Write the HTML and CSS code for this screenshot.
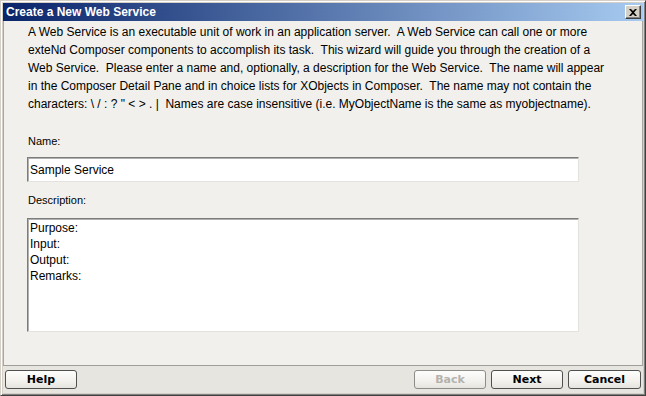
FILE: index.html
```html
<!DOCTYPE html>
<html lang="en">
<head>
    <meta charset="UTF-8">
    <title>Create a New Web Service</title>
    <link rel="stylesheet" href="styles.css">
</head>
<body>
    <div class="window">
        <div class="titlebar">
            <span class="title">Create a New Web Service</span>
            <span class="close">
                <svg width="8" height="7" viewBox="0 0 8 7"><path d="M0 0h2l2 2 2-2h2L5 3.5 8 7H6L4 5 2 7H0l3-3.5z" fill="#000"/></svg>
            </span>
        </div>
        <div class="content">
            <p class="intro">A Web Service is an executable unit of work in an application server.&nbsp; A Web Service can call one or more<br>exteNd Composer components to accomplish its task.&nbsp; This wizard will guide you through the creation of a<br>Web Service.&nbsp; Please enter a name and, optionally, a description for the Web Service.&nbsp; The name will appear<br>in the Composer Detail Pane and in choice lists for XObjects in Composer.&nbsp; The name may not contain the<br>characters: \ / : ? " &lt; &gt; . |&nbsp; Names are case insensitive (i.e. MyObjectName is the same as myobjectname).</p>
            <label class="field-label" for="name">Name:</label>
            <input id="name" class="field" type="text" value="Sample Service">
            <label class="field-label desc-label" for="desc">Description:</label>
            <textarea id="desc" class="field area">Purpose:
Input:
Output:
Remarks:</textarea>
        </div>
        <div class="buttonbar">
            <button class="btn">Help</button>
            <span class="spacer"></span>
            <button class="btn" disabled>Back</button>
            <button class="btn">Next</button>
            <button class="btn cancel">Cancel</button>
        </div>
    </div>
</body>
</html>
```
FILE: styles.css
```css
*{margin:0;padding:0;box-sizing:border-box;}
body{
    background-color: #d4d0c8;
    font-family: "Liberation Sans", Arial, sans-serif;
}
.window{
    width: 646px;
    height: 396px;
    display: flex;
    flex-direction: column;
    background-color: #d4d0c8;
    border: 1px solid;
    border-color: #d4d0c8 #404040 #404040 #d4d0c8;
    box-shadow: inset 1px 1px #fff, inset -1px -1px #808080;
    padding: 2px 2px 2px 2px;
}
.titlebar{
    height: 18px;
    display: flex;
    align-items: center;
    justify-content: space-between;
    background: linear-gradient(to right, #0a246a, #a6caf0);
    padding: 0 2px 0 2px;
}
.title{
    color: #fff;
    font-family: "Liberation Sans", Arial, sans-serif;
    font-weight: bold;
    font-size: 12px;
    padding-left: 1px;
}
.close{
    width: 16px;
    height: 14px;
    display: flex;
    align-items: center;
    justify-content: center;
    background-color: #d4d0c8;
    border: 1px solid;
    border-color: #fff #404040 #404040 #fff;
    box-shadow: inset -1px -1px #808080;
}
.content{
    flex: 1;
    display: flex;
    flex-direction: column;
    align-items: flex-start;
    background-color: #f1f0ec;
    border-left: 1px solid #a8a6a0;
    border-right: 1px solid #a8a6a0;
    border-bottom: 1px solid #a09e98;
    padding: 2px 0 0 24px;
}
.intro{
    font-size: 12px;
    line-height: 18px;
    color: #000;
}
.field-label{
    font-size: 11px;
    color: #000;
    margin-top: 22px;
    line-height: 13px;
}
.desc-label{
    margin-top: 12px;
}
.field{
    margin-top: 9px;
    margin-left: -1px;
    width: 552px;
    height: 25px;
    border: 1px solid;
    border-color: #7c7c7c #e4e2dc #e4e2dc #7c7c7c;
    box-shadow: inset 1px 1px #b0b0b0;
    background-color: #fff;
    font-family: "Liberation Sans", Arial, sans-serif;
    font-size: 12px;
    color: #000;
    padding: 0 0 0 2px;
    outline: none;
}
.area{
    margin-top: 11px;
    height: 114px;
    line-height: 16px;
    padding: 1px 0 0 2px;
    resize: none;
}
.buttonbar{
    height: 27px;
    display: flex;
    align-items: center;
    gap: 5px;
    background-color: #e6e5e0;
    padding: 0 2px 0 2px;
}
.spacer{
    flex: 1;
}
.btn{
    width: 72px;
    height: 19px;
    border: 1px solid #505050;
    border-radius: 3px;
    background: linear-gradient(#fdfdfc, #f2f1ed 60%, #e6e4de);
    font-family: "DejaVu Sans", Verdana, sans-serif;
    font-weight: bold;
    font-size: 11px;
    color: #000;
}
.btn:disabled{
    color: #b4b2ac;
    border-color: #8e8c88;
}
.cancel{
    width: 73px;
}
```
